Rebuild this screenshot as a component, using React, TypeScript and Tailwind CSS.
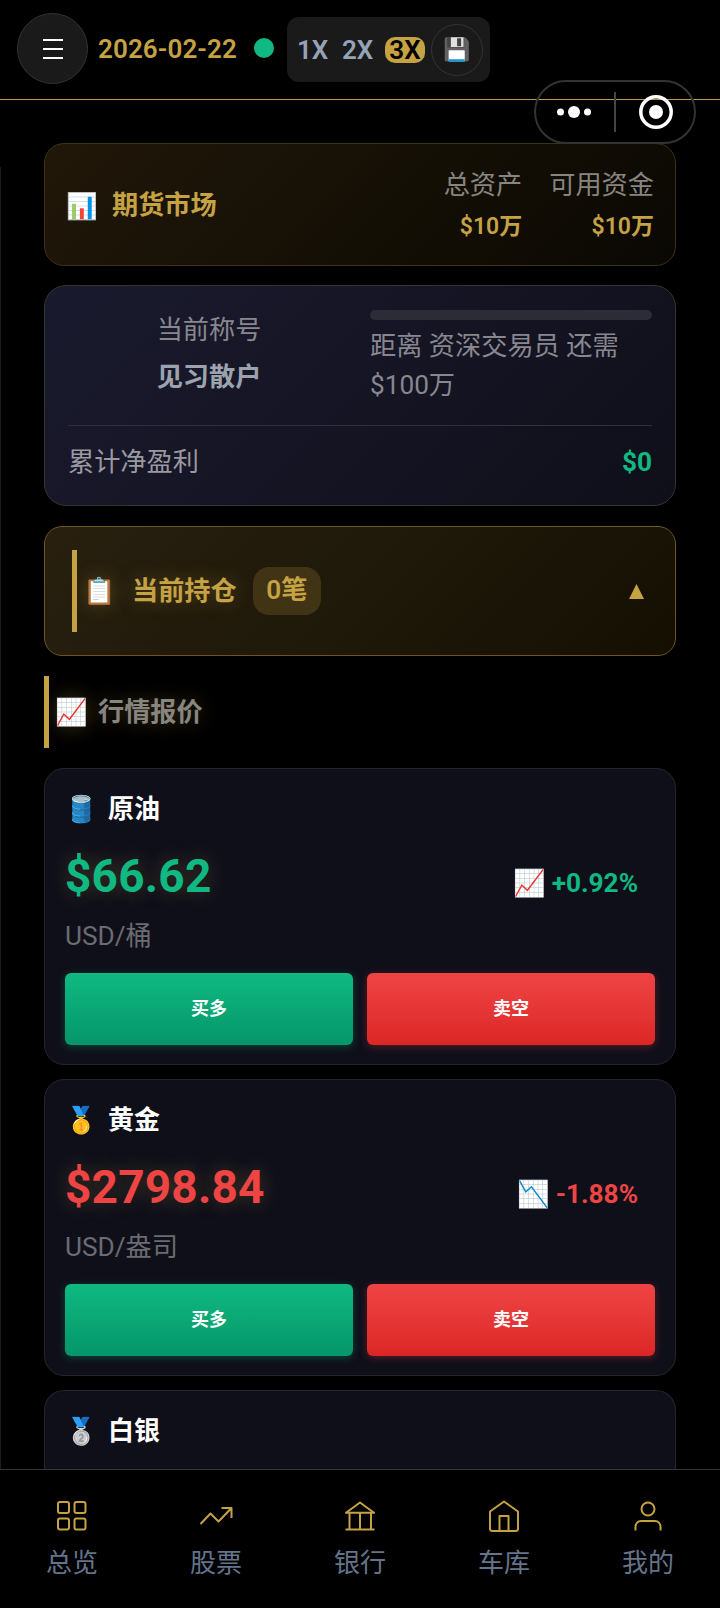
import type { ReactNode } from "react";

const quotes = [
  { icon: "🛢️", name: "原油", price: "$66.62", unit: "USD/桶", change: "+0.92%", up: true },
  { icon: "🥇", name: "黄金", price: "$2798.84", unit: "USD/盎司", change: "-1.88%", up: false },
];

const tabs: { label: string; icon: ReactNode }[] = [
  {
    label: "总览",
    icon: (
      <>
        <rect x="4" y="4" width="11" height="11" rx="2" />
        <rect x="20.5" y="4" width="11" height="11" rx="2" />
        <rect x="4" y="20.5" width="11" height="11" rx="2" />
        <rect x="20.5" y="20.5" width="11" height="11" rx="2" />
      </>
    ),
  },
  {
    label: "股票",
    icon: <path d="M2.5 26 12.5 15.5 20.5 23.5 33.5 10M23.5 10h10v10" />,
  },
  {
    label: "银行",
    icon: <path d="M4 14.8 18 4.5l14 10.3zM7.5 14.8v16.7M18 14.8v16.7M29 14.8v16.7M3.5 31.5h29" />,
  },
  {
    label: "车库",
    icon: (
      <path d="M4 13.5 18 3.5l14 10v17a2.5 2.5 0 0 1-2.5 2.5h-23A2.5 2.5 0 0 1 4 30.5zM13.5 33V18h9v15" />
    ),
  },
  {
    label: "我的",
    icon: (
      <>
        <circle cx="18" cy="11" r="6.5" />
        <path d="M5.5 32.5v-4a5.5 5.5 0 0 1 5.5-5.5h14a5.5 5.5 0 0 1 5.5 5.5v4" />
      </>
    ),
  },
];

function Header() {
  return (
    <header className="flex h-[100px] shrink-0 items-start border-b border-[#b39a50] pl-[17px] pt-[13px]">
      <button className="flex size-[71px] items-center justify-center rounded-full border border-[#333] bg-[#1a1a1a]">
        <svg className="h-5 w-5" viewBox="0 0 20 20" stroke="#fff" strokeWidth="2">
          <path d="M0 1h20M0 10h20M0 19h20" />
        </svg>
      </button>
      <span className="ml-[10px] w-[140px] text-[26px] leading-[72px] font-semibold tracking-[0.1px] text-[#c5a243]">
        2026-02-22
      </span>
      <span className="mt-[25px] ml-4 size-5 rounded-full bg-[#10b981]" />
      <div className="mt-1 ml-[13px] flex h-[65px] w-[203px] items-center rounded-xl bg-[#1a1a1a] pl-[10px] text-[26px] leading-[26px] font-semibold text-[#94a3b8]">
        <span className="w-[45px]">1X</span>
        <span className="w-[43px]">2X</span>
        <span className="flex h-[26px] w-10 items-center justify-center rounded-[10px] bg-[#c5a243] text-black">
          3X
        </span>
        <span className="ml-[6px] flex size-[52px] items-center justify-center rounded-full border border-[#333] pr-[2px] text-[22px]">
          💾
        </span>
      </div>
    </header>
  );
}

function Capsule() {
  return (
    <div className="absolute top-20 left-[534px] z-10 flex h-16 w-[162px] items-center rounded-full border-2 border-[#333]">
      <svg className="w-full" viewBox="0 0 158 60" fill="#fff">
        <circle cx="24.5" cy="30" r="3.5" />
        <circle cx="38" cy="30" r="6" />
        <circle cx="51.5" cy="30" r="3.5" />
        <path d="M79 10v40" stroke="#444" strokeWidth="2" />
        <circle cx="120" cy="30" r="15.2" fill="none" stroke="#fff" strokeWidth="3.5" />
        <circle cx="120" cy="30" r="7" />
      </svg>
    </div>
  );
}

function MarketSummary() {
  return (
    <section className="flex h-[123px] shrink-0 items-center justify-between rounded-[20px] border border-[#3d3215] bg-linear-[135deg,#211709,#151005_50%,#0a0803] px-[21px] pt-[3px]">
      <h1 className="flex items-center text-[26.2px] font-semibold text-[#c5a243]">
        <span className="w-[46px] text-[25.5px]">📊</span>
        期货市场
      </h1>
      <div className="flex gap-[27px] text-right">
        {["总资产", "可用资金"].map((label) => (
          <div key={label}>
            <div className="text-[26.2px] leading-[42px] text-[#888580]">{label}</div>
            <div className="text-[23px] leading-[42px] font-semibold text-[#c5a243]">$10万</div>
          </div>
        ))}
      </div>
    </section>
  );
}

function RankCard() {
  return (
    <section className="mt-[19px] h-[221px] shrink-0 rounded-[22px] border border-[#37342f] bg-linear-[135deg,#1a1a2e,#0f0f1a] px-[23px] pt-6 text-[26.2px]">
      <div className="grid h-[116px] grid-cols-2 gap-5 border-b border-[#302f36] text-[#88878f]">
        <div className="pt-px text-center">
          <div className="leading-[39px]">当前称号</div>
          <div className="mt-2 leading-[39px] font-semibold text-[#9ca3af]">见习散户</div>
        </div>
        <div>
          <div className="h-2.5 rounded-full bg-[#2d2c36]" />
          <div className="mt-[7px] leading-[39px]">
            距离 资深交易员 还需
            <br />
            $100万
          </div>
        </div>
      </div>
      <div className="flex h-[74px] items-center justify-between text-[#9a99a0]">
        <span>累计净盈利</span>
        <span className="font-bold text-[#10b981]">$0</span>
      </div>
    </section>
  );
}

function Positions() {
  return (
    <section className="mt-5 flex h-[130px] shrink-0 items-center rounded-[18px] border border-[#6b5725] bg-linear-[135deg,#281f0f,#1f190a_50%,#150f02] pr-[31px] pl-[27px] text-[26.2px] font-semibold text-[#c5a243]">
      <div className="flex h-[82px] items-center border-l-[5px] border-[#c5a243] pt-px pl-[6px] [text-shadow:0_0_20px_rgba(197,162,67,0.3)]">
        <span className="w-[49px]">📋</span>
        当前持仓
      </div>
      <span className="ml-4 flex h-12 w-[68px] items-center justify-center rounded-2xl bg-[#413415]">
        0笔
      </span>
      <svg className="ml-auto h-[15px] w-[15px]" viewBox="0 0 15 15">
        <path d="M7.5 0 15 15H0z" fill="#c5a243" />
      </svg>
    </section>
  );
}

function QuoteCard({ quote }: { quote: (typeof quotes)[number] }) {
  const color = quote.up ? "text-[#10b981]" : "text-[#ef4444]";
  return (
    <article className="mb-[14px] h-[297px] shrink-0 rounded-[20px] border border-[#25252c] bg-[#0f0f1a] px-5 pt-5">
      <h3 className="flex h-10 items-center text-[26px] font-bold text-white">
        <span className="w-[43px]">{quote.icon}</span>
        {quote.name}
      </h3>
      <div className="mt-4 flex h-[62px] items-baseline justify-between pr-[17px]">
        <span className={`text-[46px] leading-[62px] font-bold tracking-[0.2px] [text-shadow:0_0_20px_rgba(197,162,67,0.3)] ${color}`}>
          {quote.price}
        </span>
        <span className={`flex items-baseline gap-[6px] text-[26.2px] font-bold ${color}`}>
          <span>{quote.up ? "📈" : "📉"}</span>
          {quote.change}
        </span>
      </div>
      <div className="mt-[10px] text-[26.2px] leading-[39px] text-[#6b6b71]">{quote.unit}</div>
      <div className="mt-[17px] grid grid-cols-2 gap-[14px] text-lg font-bold text-white">
        <button className="h-[72px] rounded-md bg-linear-to-b from-[#10b981] to-[#059669] shadow-[0_2px_8px_rgba(16,185,129,0.3)]">
          买多
        </button>
        <button className="h-[72px] rounded-md bg-linear-to-b from-[#ef4444] to-[#dc2626] shadow-[0_2px_8px_rgba(239,68,68,0.3)]">
          卖空
        </button>
      </div>
    </article>
  );
}

function TabBar() {
  return (
    <nav className="grid h-[139px] shrink-0 grid-cols-5 border-t border-[#333338] bg-black pt-[28px]">
      {tabs.map((tab) => (
        <button key={tab.label} className="flex flex-col items-center">
          <svg
            className="size-9"
            viewBox="0 0 36 36"
            fill="none"
            stroke="#c5a243"
            strokeWidth="2"
            strokeLinejoin="round"
          >
            {tab.icon}
          </svg>
          <span className="mt-[10px] text-[26px] leading-[39px] text-[#64748b]">{tab.label}</span>
        </button>
      ))}
    </nav>
  );
}

export default function App() {
  return (
    <div className="relative flex h-[1608px] w-[720px] flex-col overflow-hidden bg-black font-['Roboto','Noto_Sans_CJK_SC',sans-serif]">
      <Header />
      <Capsule />
      <main className="flex min-h-0 flex-1 flex-col overflow-hidden px-11 pt-[43px]">
        <MarketSummary />
        <RankCard />
        <Positions />
        <h2 className="mt-5 mb-5 flex h-[72px] shrink-0 items-center border-l-[5px] border-[#c5a243] pt-px pl-[6px] text-[26.2px] font-semibold text-[#888580] [text-shadow:0_0_20px_rgba(197,162,67,0.3)]">
          <span className="w-[43px]">📈</span>
          行情报价
        </h2>
        {quotes.map((quote) => (
          <QuoteCard key={quote.name} quote={quote} />
        ))}
        <article className="flex-1 rounded-t-[20px] border border-b-0 border-[#25252c] bg-[#0f0f1a] px-5 pt-5">
          <h3 className="flex h-10 items-center text-[26px] font-bold text-white">
            <span className="w-[43px]">🥈</span>
            白银
          </h3>
        </article>
      </main>
      <TabBar />
      <div className="absolute top-[167px] left-0 h-[1302px] w-px bg-[#1c1c1c]" />
    </div>
  );
}
